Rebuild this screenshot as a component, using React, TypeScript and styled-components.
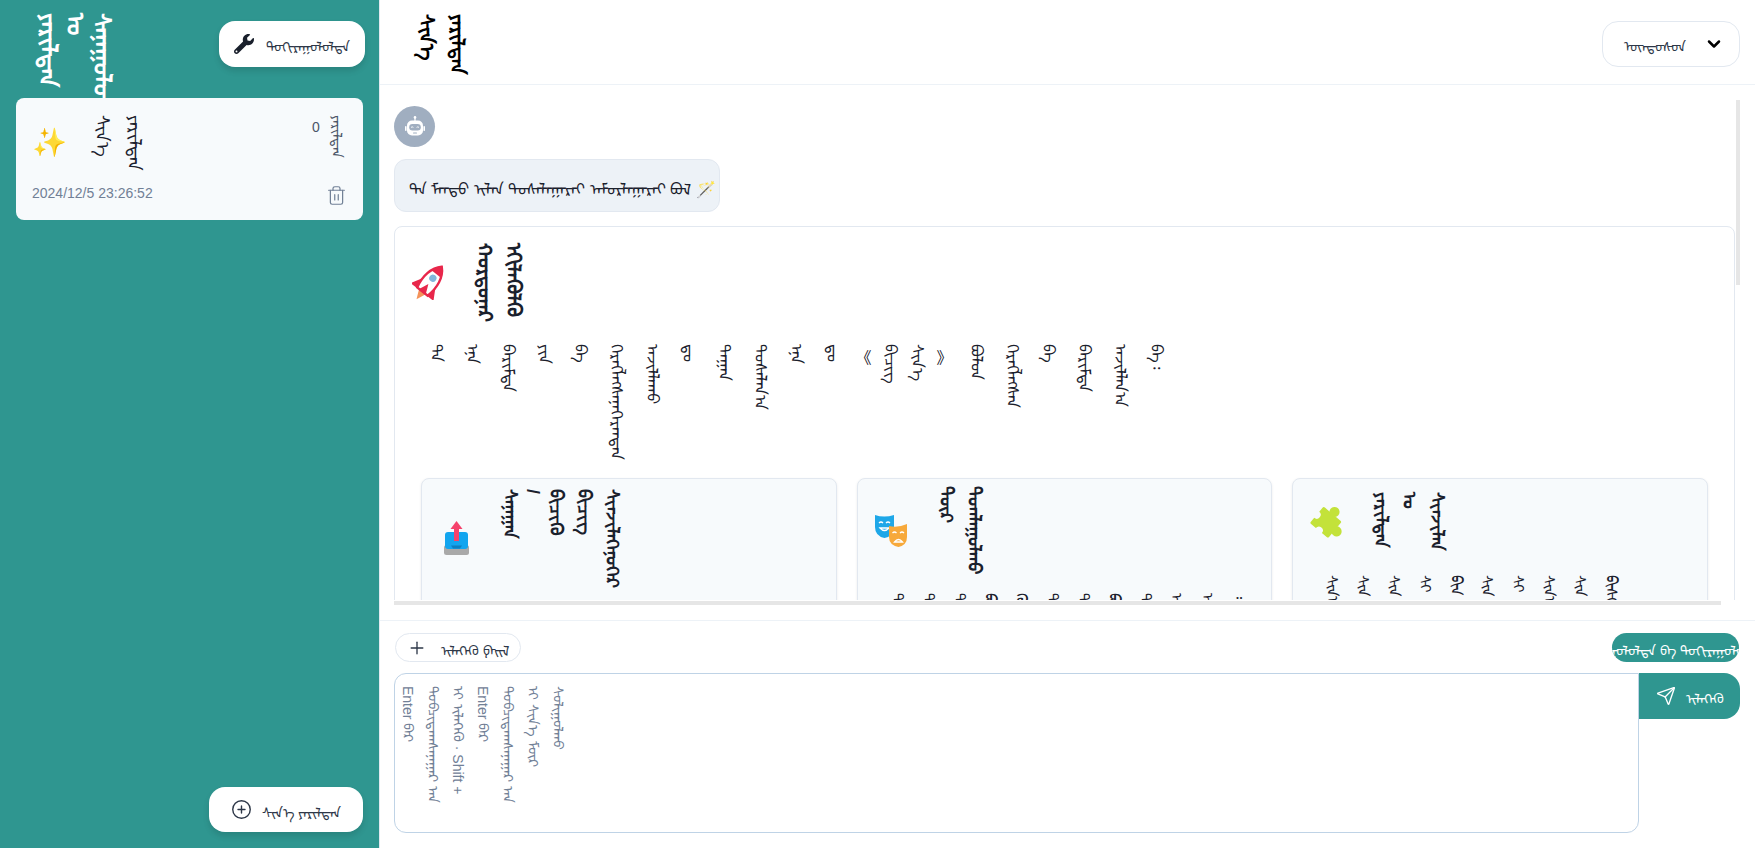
import { createGlobalStyle, styled } from "styled-components"
import { Trash2, CirclePlus, Plus, Send, ChevronDown } from "lucide-react"
import { FaWrench } from "react-icons/fa"
import type { ReactNode } from "react"

const GlobalStyle = createGlobalStyle`
    html, body {
        margin: 0;
        height: 100%;
        overflow: hidden;
    }
    body {
        font-family: "Liberation Sans", "Noto Sans", sans-serif;
        color: #1a202c;
    }
    #root {
        height: 100%;
    }
    * {
        box-sizing: border-box;
    }
`

const TEAL = "#2f9690"

const Page = styled.div`
    display: flex;
    height: 848px;
    width: 1755px;
    background: #fff;
`

const Sidebar = styled.aside`
    width: 380px;
    flex-shrink: 0;
    background: ${TEAL};
    display: flex;
    flex-direction: column;
    padding: 0 16px 16px;
    border-right: 1px solid #e2e8f0;
`

const SidebarTop = styled.div`
    height: 98px;
    display: flex;
    align-items: flex-start;
    justify-content: space-between;
`

const Vertical = styled.div`
    writing-mode: vertical-lr;
`

const WordLine = styled.span<{ $line?: number }>`
    display: block;
    white-space: nowrap;
    ${p => p.$line && `line-height: ${p.$line}px;`}
`

// the book-title marks stay upright in the column, unlike the words around them
const QuoteMark = styled.span`
    display: block;
    writing-mode: horizontal-tb;
    width: 27px;
    margin-top: 2px;
    text-align: center;
    line-height: 20px;
    font-family: "Noto Sans CJK SC", sans-serif;
`

const Digit = styled.span`
    display: block;
    text-orientation: upright;
    margin-top: 4px;
`

const Emoji = styled.span<{ $size: number }>`
    font-size: ${p => p.$size}px;
    line-height: 1;
    flex-shrink: 0;
`

const IconBox = styled.span`
    width: 35px;
    height: 35px;
    flex-shrink: 0;
    display: flex;
    align-items: center;
    justify-content: center;
`

const SidebarTitle = styled(Vertical)`
    color: #fff;
    font-size: 24px;
    font-weight: 700;
    line-height: 27px;
    margin: 13px 0 0 19px;
`

const WhiteButton = styled.button`
    display: flex;
    align-items: center;
    justify-content: center;
    gap: 12px;
    border: 0;
    border-radius: 16px;
    background: #fff;
    color: #2d3748;
    font: inherit;
    font-size: 14px;
    box-shadow: 0 4px 6px rgba(0, 0, 0, 0.12);
`

const SettingsButton = styled(WhiteButton)`
    width: 146px;
    height: 46px;
    margin: 21px -2px 0 0;
`

const ChatCard = styled.div`
    position: relative;
    z-index: 1;
    background: #f7fafc;
    border-radius: 8px;
    height: 122px;
    padding: 17px 16px 14px;
    display: flex;
    flex-direction: column;
    justify-content: space-between;
`

const ChatRow = styled.div`
    display: flex;
    align-items: flex-start;
    justify-content: space-between;
`

const ChatName = styled.div`
    display: flex;
    align-items: center;
    gap: 19px;
`

const ChatTitle = styled(Vertical)`
    font-size: 18px;
    line-height: 32px;
    color: #1a202c;
`

const Count = styled(Vertical)`
    font-size: 14px;
    color: #4a5568;
    line-height: 21px;
`

const DateText = styled.span`
    font-size: 14px;
    color: #718096;
`

const SidebarFoot = styled.div`
    margin-top: auto;
    display: flex;
    justify-content: flex-end;
`

const NewButton = styled(WhiteButton)`
    width: 154px;
    height: 45px;
    gap: 10px;
`

const Main = styled.main`
    flex: 1;
    min-width: 0;
    display: flex;
    flex-direction: column;
`

const Header = styled.header`
    height: 85px;
    flex-shrink: 0;
    border-bottom: 1px solid #edf2f7;
    display: flex;
    align-items: flex-start;
    justify-content: space-between;
    padding: 14px 15px 0 31px;
`

const HeaderTitle = styled(Vertical)`
    font-size: 20px;
    font-weight: 700;
    line-height: 31px;
    color: #000;
`

const Select = styled.div`
    width: 138px;
    height: 46px;
    margin-top: 7px;
    border: 1px solid #e2e8f0;
    border-radius: 16px;
    display: flex;
    align-items: center;
    justify-content: space-between;
    padding: 0 15px 0 21px;
    font-size: 14px;
    color: #2d3748;
`

const MessagesFrame = styled.section`
    position: relative;
    flex: 1;
    min-height: 0;
    margin: 15px 14px;
`

const Messages = styled.div`
    height: calc(100% - 5px);
    overflow: hidden;
    padding-top: 6px;
`

// headless chrome paints no scrollbars, so the two thumbs are drawn over the frame
const ThumbY = styled.div`
    position: absolute;
    top: 0;
    right: 1px;
    width: 4px;
    height: 185px;
    background: #e6e6e6;
`

const ThumbX = styled.div`
    position: absolute;
    bottom: 0;
    left: 0;
    width: 1327px;
    height: 4px;
    background: #e6e6e6;
`

const Avatar = styled.div`
    width: 41px;
    height: 41px;
    border-radius: 50%;
    background: #a0aec0;
    display: flex;
    align-items: center;
    justify-content: center;
`

const Bubble = styled.div`
    width: 326px;
    height: 53px;
    margin-top: 12px;
    display: flex;
    align-items: center;
    padding: 0 14px;
    background: #edf2f7;
    border: 1px solid #e2e8f0;
    border-radius: 12px;
    font-size: 16px;
    white-space: nowrap;
`

const Answer = styled.div`
    margin-top: 14px;
    width: 1341px;
    border: 1px solid #e2e8f0;
    border-radius: 8px;
    padding: 14px 26px;
`

const Heading = styled.div`
    display: flex;
    align-items: center;
    gap: 23px;
    margin-left: -9px;
    min-height: 82px;
`

const HeadingText = styled(Vertical)<{ $line: number; $size: number }>`
    font-size: ${p => p.$size}px;
    font-weight: 700;
    line-height: ${p => p.$line}px;
`

const Paragraph = styled(Vertical)`
    margin: 21px 0 0 -3px;
    height: 116px;
    font-size: 16px;
    line-height: 36px;
`

const Cards = styled.div`
    margin-top: 18px;
    display: grid;
    grid-template-columns: repeat(3, 1fr);
    gap: 20px;
`

const Card = styled.div`
    background: #f7fafc;
    border: 1px solid #e2e8f0;
    border-radius: 8px;
    box-shadow: 0 1px 3px rgba(0, 0, 0, 0.08);
    padding: 15px 16px;
    height: 300px;
`

const CardHead = styled.div<{ $height: number }>`
    display: flex;
    align-items: center;
    gap: 23px;
    height: ${p => p.$height}px;
`

const CardBody = styled(Vertical)`
    margin: 27px 0 0 8px;
    font-size: 15px;
    line-height: 31px;
`

const Composer = styled.footer`
    height: 228px;
    flex-shrink: 0;
    border-top: 1px solid #edf2f7;
    padding: 12px 15px 15px 14px;
    display: flex;
    flex-direction: column;
    gap: 11px;
`

const ToolRow = styled.div`
    display: flex;
    justify-content: space-between;
    align-items: center;
`

const Pill = styled.button`
    height: 29px;
    border-radius: 15px;
    font: inherit;
    font-size: 14px;
    display: flex;
    align-items: center;
    justify-content: center;
    white-space: nowrap;
    overflow: hidden;
`

const AttachButton = styled(Pill)`
    width: 126px;
    margin-left: 1px;
    gap: 14px;
    background: #fff;
    border: 1px solid #e2e8f0;
    color: #2d3748;
`

const ToggleButton = styled(Pill)`
    width: 127px;
    margin-right: 1px;
    padding: 0;
    border: 0;
    background: ${TEAL};
    color: #fff;
`

const InputRow = styled.div`
    display: flex;
    align-items: flex-start;
`

const InputBox = styled.textarea`
    width: 1245px;
    height: 160px;
    resize: none;
    border: 1px solid #bfd3e6;
    border-radius: 12px 0 12px 12px;
    padding: 12px 0;
    outline: none;
    writing-mode: vertical-lr;
    font: inherit;
    font-size: 14px;
    line-height: 25px;
    &::placeholder {
        color: #718096;
        opacity: 1;
    }
`

const SendButton = styled.button`
    width: 101px;
    height: 46px;
    border: 0;
    border-radius: 0 16px 16px 0;
    background: ${TEAL};
    color: #fff;
    font: inherit;
    font-size: 14px;
    display: flex;
    align-items: center;
    justify-content: center;
    gap: 10px;
`

// every word stands in its own column; some columns are narrower than the rest
const Words = ({ text, lineOf }: { text: string; lineOf?: (word: string, i: number) => number | undefined }) => (
    <>
        {text.split(" ").map((w, i) => (
            w === "《" || w === "》"
                ? <QuoteMark key={i}>{w}</QuoteMark>
                : <WordLine key={i} $line={lineOf?.(w, i)}>{w}</WordLine>
        ))}
    </>
)

const RobotIcon = () => (
    <svg width="24" height="24" viewBox="0 0 24 24" fill="#fff">
        <circle cx="12" cy="2.4" r="1.3" />
        <rect x="11.4" y="3" width="1.2" height="3" />
        <rect x="4" y="5.5" width="16" height="15" rx="5" />
        <rect x="2" y="11" width="1.6" height="5" rx="0.8" />
        <rect x="20.4" y="11" width="1.6" height="5" rx="0.8" />
        <rect x="6.2" y="9" width="11.6" height="6.4" rx="3.2" fill="#a0aec0" />
        <path d="M8 12.4q1.2-1 2.4 0M13.6 12.4q1.2-1 2.4 0" stroke="#fff" strokeWidth="0.9" fill="none" />
        <rect x="10" y="17.6" width="4" height="1" rx="0.5" fill="#a0aec0" />
    </svg>
)

const RocketIcon = () => (
    <svg width="35" height="35" viewBox="3 3 29 29">
        <g transform="rotate(38 17.5 17.5)">
            <path d="M14 27h7l-3.5 8z" fill="#f4935a" />
            <path d="M11.5 17L5.5 27.5h7zM23.5 17l6 10.500h-7z" fill="#e8274b" />
            <path d="M17.500 1C24 7 25.500 17 23 27H12C9.500 17 11 7 17.500 1z" fill="#fff" stroke="#e8274b" strokeWidth="2" />
            <path d="M17.500 1C20 3.200 21.800 5.800 22.800 8.500H12.200C13.200 5.800 15 3.200 17.500 1z" fill="#e8274b" />
            <circle cx="17.500" cy="13" r="3" fill="#82b7dc" />
            <path d="M17.500 19l3.500 8h-7z" fill="#e8274b" />
        </g>
    </svg>
)

const OutboxIcon = () => (
    <svg width="35" height="35" viewBox="0 0 35 35">
        <rect x="6" y="24" width="25" height="10" rx="2.500" fill="#a9a9a9" />
        <rect x="7" y="11" width="23" height="17" rx="3" fill="#12a5ef" />
        <path d="M13 24.500h11l-2 3h-7z" fill="#0d7fc0" />
        <path d="M18.500 0l6 8h-3.500v12h-5V8h-3.500z" fill="#f5426c" />
    </svg>
)

const MasksIcon = () => (
    <svg width="35" height="35" viewBox="0 0 35 35">
        <path d="M1 2Q10 5 20 2L20 14Q20 23 10.500 25Q1 23 1 14z" fill="#1ea7e8" />
        <path d="M5 10q2-2 4 0M12 10q2-2 4 0M6 15q4.500 5 9 0z" stroke="#fff" strokeWidth="1.300" fill="none" />
        <path d="M15 13Q24 15 33 11L33 24Q33 32 24.500 34Q15 32 15 24z" fill="#f7a93b" />
        <path d="M18.500 20q2-2 4 0M26 20q2-2 4 0M20.500 29q4-5 8 0z" stroke="#fff" strokeWidth="1.300" fill="none" />
    </svg>
)

const PuzzleIcon = () => (
    <svg width="35" height="35" viewBox="2 2 31 31">
        <g transform="rotate(40 17.5 17.5)">
            <rect x="7" y="9" width="21" height="19" rx="1.500" fill="#c3e23a" />
            <circle cx="17.500" cy="6.500" r="4.500" fill="#c3e23a" />
            <circle cx="30" cy="18.500" r="4.500" fill="#c3e23a" />
            <circle cx="7" cy="18.500" r="3.500" fill="#f7fafc" />
            <circle cx="17.500" cy="28" r="3.500" fill="#f7fafc" />
        </g>
    </svg>
)

const answerText = "ᠲᠠ ᠡᠨᠡ ᠪᠠᠷᠢᠮᠲᠠ ᠶᠢᠨ ᠪᠠ ᠬᠡᠷᠡᠭᠯᠡᠭᠰᠡᠨᠡᠭᠡᠷᠡᠨᠲᠡᠨ ᠠᠵᠢᠯᠯᠠᠬᠤ ᠳᠤ ᠳᠠᠭᠠᠨ ᠲᠤᠰᠠᠯᠠᠨ᠎ᠠ ᠡᠨᠡ ᠳᠤ 《 ᠪᠢᠴᠢᠭ ᠰᠢᠨ᠎ᠡ 》 ᠪᠣᠯᠣᠨ ᠬᠡᠷᠡᠭᠯᠡᠭᠰᠡᠨ ᠪᠠ ᠪᠠᠷᠢᠮᠲᠠ ᠠᠵᠢᠯᠯᠠᠨ᠎ᠠ ᠪᠠ᠄"

// the quoted title sits closer together than the rest of the text
const answerLine = (_: string, i: number) => (i >= 12 && i <= 15 ? 27 : undefined)
const slashLine = (w: string) => (w === "/" ? 18 : undefined)

const cards: { key: string; icon: ReactNode; height: number; title: string; body: string }[] = [
    { key: "upload", icon: <OutboxIcon />, height: 89, title: "ᠰᠠᠨᠠᠭᠠᠨ / ᠪᠢᠴᠢᠬᠦ ᠪᠢᠴᠢᠭ ᠰᠢᠨᠵᠢᠯᠡᠭᠡᠨᠦᠭᠡᠷ", body: "ᠲᠠ ᠡᠨᠡ ᠪᠠ ᠪᠣᠯ ᠬᠦ ᠲᠠ ᠲᠠ ᠪᠣᠯ ᠲᠠ ᠬᠦ" },
    { key: "roles", icon: <MasksIcon />, height: 72, title: "ᠳᠦᠷ ᠲᠤᠭᠯᠠᠭᠤᠯᠬᠤ", body: "ᠲᠠ ᠲᠠ ᠲᠠ ᠪᠣᠯ ᠬᠦ ᠲᠠ ᠲᠠ ᠪᠣᠯ ᠲᠠ ᠡ ᠢ ᠄" },
    { key: "plugins", icon: <PuzzleIcon />, height: 54, title: "ᠶᠠᠷᠢᠯᠳᠠᠨ ᠤ ᠰᠢᠨᠵᠢᠯᠡᠨ", body: "ᠰᠢᠨ᠎ᠡ ᠰᠢᠨ ᠱᠢᠨ ᠰᠢ ᠪᠢᠨ ᠱᠢᠨ ᠰᠢ ᠰᠢᠨ᠎ᠡ ᠰᠢᠨ ᠪᠢᠰᠢ" },
]

const App = () => {
    return (
        <Page>
            <GlobalStyle />
            <Sidebar>
                <SidebarTop>
                    <SidebarTitle><Words text="ᠶᠠᠷᠢᠯᠳᠠᠨ ᠤ ᠰᠠᠨᠠᠭᠤᠯᠤᠭᠰᠠᠨ" /></SidebarTitle>
                    <SettingsButton><FaWrench size={20} color="#1a202c" />ᠲᠣᠬᠢᠷᠠᠭᠤᠯᠤᠯᠲᠠ</SettingsButton>
                </SidebarTop>
                <ChatCard>
                    <ChatRow>
                        <ChatName>
                            <Emoji $size={28}>✨</Emoji>
                            <ChatTitle><Words text="ᠰᠢᠨ᠎ᠡ ᠶᠠᠷᠢᠯᠳᠠᠨ" /></ChatTitle>
                        </ChatName>
                        <Count><Digit>0</Digit><WordLine>ᠶᠠᠷᠢᠯᠳᠠᠨ</WordLine></Count>
                    </ChatRow>
                    <ChatRow>
                        <DateText>2024/12/5 23:26:52</DateText>
                        <Trash2 size={21} color="#718096" strokeWidth={1.4} />
                    </ChatRow>
                </ChatCard>
                <SidebarFoot>
                    <NewButton><CirclePlus size={21} strokeWidth={1.6} />ᠰᠢᠨ᠎ᠡ ᠶᠠᠷᠢᠯᠳᠠᠨ</NewButton>
                </SidebarFoot>
            </Sidebar>
            <Main>
                <Header>
                    <HeaderTitle><Words text="ᠰᠢᠨ᠎ᠡ ᠶᠠᠷᠢᠯᠳᠠᠨ" /></HeaderTitle>
                    <Select>ᠦᠨᠳᠦᠰᠦᠨ<ChevronDown size={20} color="#000" strokeWidth={3} /></Select>
                </Header>
                <MessagesFrame>
                    <Messages>
                        <Avatar><RobotIcon /></Avatar>
                        <Bubble>ᠲᠠ ᠮᠡᠨᠳᠦ ᠢᠯᠠᠨ ᠲᠤᠰᠠᠯᠠᠭᠠᠷᠠᠢ ᠠᠮᠤᠷᠯᠠᠭᠠᠷᠠᠢ ᠪᠣᠯ 🪄</Bubble>
                        <Answer>
                            <Heading>
                                <IconBox><RocketIcon /></IconBox>
                                <HeadingText $size={20} $line={29}><Words text="ᠬᠤᠷᠳᠤᠨᠠᠷ ᠡᠬᠢᠯᠡᠭᠦᠯᠬᠦ" /></HeadingText>
                            </Heading>
                            <Paragraph><Words text={answerText} lineOf={answerLine} /></Paragraph>
                            <Cards>
                                {cards.map(c => (
                                    <Card key={c.key}>
                                        <CardHead $height={c.height}>
                                            <IconBox>{c.icon}</IconBox>
                                            <HeadingText $size={18} $line={28}><Words text={c.title} lineOf={slashLine} /></HeadingText>
                                        </CardHead>
                                        <CardBody><Words text={c.body} /></CardBody>
                                    </Card>
                                ))}
                            </Cards>
                        </Answer>
                    </Messages>
                    <ThumbY />
                    <ThumbX />
                </MessagesFrame>
                <Composer>
                    <ToolRow>
                        <AttachButton><Plus size={20} strokeWidth={1.6} />ᠢᠯᠡᠭᠡᠬᠦ ᠹᠠᠢᠯ</AttachButton>
                        <ToggleButton>ᠰᠠᠨᠠᠭᠤᠯᠤᠯᠲᠠ ᠪᠠ ᠲᠣᠬᠢᠷᠠᠭᠤᠯᠤᠯᠲᠠ</ToggleButton>
                    </ToolRow>
                    <InputRow>
                        <InputBox placeholder="Enter ᠪᠡᠷ ᠲᠣᠪᠴᠢᠳᠠᠭᠰᠠᠨᠠᠭᠠᠷ ᠠᠨ ᠢ ᠢᠯᠡᠭᠡᠬᠦ · Shift + Enter ᠪᠡᠷ ᠲᠣᠪᠴᠢᠳᠠᠭᠰᠠᠨᠠᠭᠠᠷ ᠠᠨ ᠢ ᠰᠢᠨ᠎ᠡ ᠮᠥᠷ ᠰᠣᠯᠢᠭᠤᠯᠬᠤ" />
                        <SendButton><Send size={20} strokeWidth={1.6} />ᠢᠯᠡᠭᠡᠬᠦ</SendButton>
                    </InputRow>
                </Composer>
            </Main>
        </Page>
    )
}

export default App
